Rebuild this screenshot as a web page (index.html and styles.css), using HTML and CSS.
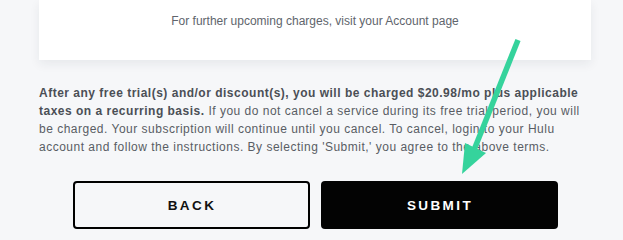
FILE: index.html
```html
<!DOCTYPE html>
<html lang="en">
<head>
<meta charset="utf-8">
<title>Review</title>
<link rel="stylesheet" href="styles.css">
</head>
<body>
<main class="page">
  <section class="card">
    <p class="card-note">For further upcoming charges, visit your Account page</p>
  </section>
  <p class="terms"><strong>After any free trial(s) and/or discount(s), you will be charged $20.98/mo plus applicable<br>taxes on a recurring basis.</strong> If you do not cancel a service during its free trial period, you will<br>be charged. Your subscription will continue until you cancel. To cancel, login to your Hulu<br>account and follow the instructions. By selecting 'Submit,' you agree to the above terms.</p>
  <div class="actions">
    <button class="btn btn-back" type="button">BACK</button>
    <button class="btn btn-submit" type="button">SUBMIT</button>
  </div>
</main>
<svg class="arrow" width="623" height="236" viewBox="0 0 623 236" aria-hidden="true">
  <line x1="518" y1="40" x2="474" y2="150" stroke="#35d39c" stroke-width="5.5" stroke-linecap="butt"/>
  <polygon points="465,143 486,153 462,174" fill="#35d39c"/>
</svg>
</body>
</html>
```
FILE: styles.css
```css
html, body {
  margin: 0;
  padding: 0;
}
body {
  background: #f6f7f9;
  font-family: "Liberation Sans", Arial, sans-serif;
  width: 623px;
  height: 236px;
  overflow: hidden;
  position: relative;
}
.page {
  display: flex;
  flex-direction: column;
  width: 552px;
  padding-left: 39px;
}
.card {
  height: 60px;
  background: #ffffff;
  box-shadow: 0 4px 10px rgba(30, 40, 60, 0.07);
  display: flex;
  justify-content: center;
}
.card-note {
  margin: 14px 0 0;
  font-size: 12px;
  line-height: 15px;
  color: #60656c;
}
.terms {
  margin: 24px 0 0;
  font-size: 12px;
  line-height: 18px;
  color: #595d64;
  letter-spacing: 0.5px;
  white-space: nowrap;
}
.terms strong {
  color: #4b4f56;
  font-weight: bold;
}
.actions {
  display: flex;
  justify-content: center;
  gap: 11px;
  margin-top: 25px;
}
.btn {
  width: 237px;
  height: 48px;
  border-radius: 4px;
  font-family: "Liberation Sans", Arial, sans-serif;
  font-weight: bold;
  font-size: 13.5px;
  letter-spacing: 2.4px;
  padding: 0 0 0 2px;
  cursor: pointer;
}
.btn-back {
  background: transparent;
  border: 2px solid #000000;
  color: #111111;
}
.btn-submit {
  background: #030303;
  border: none;
  color: #ffffff;
}
.arrow {
  position: absolute;
  left: 0;
  top: 0;
  pointer-events: none;
}
```
